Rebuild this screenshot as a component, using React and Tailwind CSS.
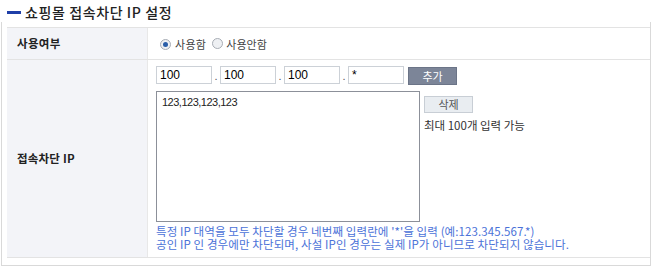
import React from "react";

const KR = { fontFamily: '"Noto Sans CJK KR", "Noto Sans", sans-serif' };

function Radio({ checked }) {
  return (
    <span className="inline-flex items-center justify-center w-[11px] h-[11px] rounded-full border border-[#a8adb5] bg-[#eef0f3]">
      {checked && <span className="w-[5px] h-[5px] rounded-full bg-[#2a5ea8]" />}
    </span>
  );
}

function IpInput({ value }) {
  return (
    <div
      className="w-[56px] h-[18px] border border-[#ccd1d7] bg-white pl-[3px] text-[12px] leading-[16px] text-black"
      style={{ fontFamily: '"Liberation Sans", Arial, sans-serif' }}
    >
      {value}
    </div>
  );
}

function Dot() {
  return (
    <span
      className="w-[8px] text-center text-[11px] leading-[18px] text-[#555] self-end"
      style={{ fontFamily: '"Liberation Sans", Arial, sans-serif' }}
    >
      .
    </span>
  );
}

export default function App() {
  return (
    <div className="w-[652px] h-[268px] bg-white" style={KR}>
      <div className="h-[22px] flex items-start pt-[3px] pl-[7px]">
        <div className="w-[14px] h-[3px] bg-[#1f3fa8] mt-[8px]" />
        <div className="ml-[4px] text-[14px] leading-[18px] text-[#222] font-medium tracking-[0.6px]">
          쇼핑몰 접속차단 IP 설정
        </div>
      </div>
      <div className="ml-[1px] w-[650px] border-x border-b border-[#d9d9d9] pt-[5px] pl-[5px] pb-[7px]">
        <div className="border-y border-[#e3e3e3]">
          <div className="flex h-[32px] border-b border-[#e3e3e3]">
            <div className="w-[141px] bg-[#f3f4f8] border-r border-[#e8e8e8] pl-[10px] flex items-center text-[11.5px] tracking-[0.3px] font-bold text-[#222]">
              사용여부
            </div>
            <div className="flex items-center pl-[12px] pt-[2px] text-[11px] text-[#444]">
              <Radio checked />
              <span className="ml-[4px] tracking-[0.3px]">사용함</span>
              <span className="ml-[6px]"><Radio /></span>
              <span className="ml-[3px]">사용안함</span>
            </div>
          </div>
          <div className="flex h-[197px]">
            <div className="w-[141px] bg-[#f3f4f8] border-r border-[#e8e8e8] pl-[10px] flex items-center text-[11.5px] tracking-[0.2px] font-bold text-[#222]">
              접속차단 IP
            </div>
            <div className="flex flex-col pl-[8px] pt-[6px]">
              <div className="flex items-start">
                <IpInput value="100" />
                <Dot />
                <IpInput value="100" />
                <Dot />
                <IpInput value="100" />
                <Dot />
                <IpInput value="*" />
                <button className="ml-[4px] mt-[1px] w-[49px] h-[18px] bg-[#7c8598] border border-[#6b7487] text-white text-[11px] leading-[16px]">
                  추가
                </button>
              </div>
              <div className="flex mt-[6px]">
                <div
                  className="w-[264px] h-[131px] border border-[#8c9099] bg-white pl-[5px] pt-[2px] text-[11px] tracking-[-0.5px] text-[#222]"
                  style={{ fontFamily: '"Liberation Sans", Arial, sans-serif' }}
                >
                  123,123,123,123
                </div>
                <div className="ml-[4px] flex flex-col items-start">
                  <button className="mt-[5px] w-[49px] h-[17px] bg-[#e9edf1] border border-[#c8ced5] text-[#555] text-[11px] leading-[15px]">
                    삭제
                  </button>
                  <div className="mt-[5px] text-[11.5px] text-[#333] leading-[14px]">최대 100개 입력 가능</div>
                </div>
              </div>
              <div className="mt-[3px] text-[11.5px] leading-[13px] tracking-[0.1px] text-[#4b72d8] whitespace-nowrap">
                <div className="h-[13px]">특정 IP 대역을 모두 차단할 경우 네번째 입력란에 '*'을 입력 (예:123.345.567.*)</div>
                <div className="h-[13px]">공인 IP 인 경우에만 차단되며, 사설 IP인 경우는 실제 IP가 아니므로 차단되지 않습니다.</div>
              </div>
            </div>
          </div>
        </div>
      </div>
    </div>
  );
}
